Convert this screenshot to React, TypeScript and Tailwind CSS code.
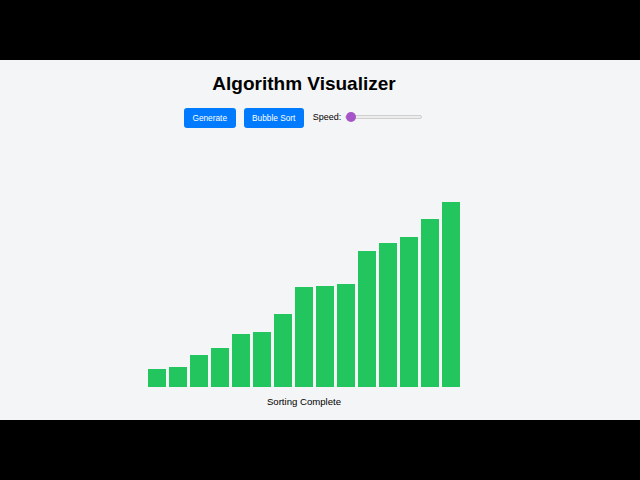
import { useState } from "react";

const heights = [18, 20, 32, 39, 53, 55, 73, 100, 101, 103, 136, 144, 150, 168, 185];

export default function App() {
  const [speed, setSpeed] = useState(0);

  return (
    <div
      className="flex h-screen w-full flex-col bg-black"
      style={{ fontFamily: '"Liberation Sans", Arial, sans-serif' }}
    >
      <div className="h-[60px] shrink-0" />
      <div className="flex h-[360px] shrink-0 flex-col items-center bg-[#f4f5f7] pr-[32px]">
        <h1 className="mt-[12px] text-[19px] font-bold leading-[24px] text-black">
          Algorithm Visualizer
        </h1>
        <div className="mt-[12px] mr-[2px] flex h-[20px] items-center">
          <button className="h-[20px] w-[52px] rounded-[3px] bg-[#007bff] text-[8.3px] text-white">
            Generate
          </button>
          <button className="ml-[8px] h-[20px] w-[60px] rounded-[3px] bg-[#007bff] text-[8.3px] text-white">
            Bubble Sort
          </button>
          <span className="ml-[9px] -mt-[3px] text-[9px] leading-[12px] text-black">Speed:</span>
          <input
            type="range"
            min={0}
            max={100}
            value={speed}
            onChange={(e) => setSpeed(Number(e.target.value))}
            className="ml-[4px] -mt-[3px] h-[10px] w-[77px] cursor-pointer appearance-none bg-transparent [&::-webkit-slider-runnable-track]:h-[4px] [&::-webkit-slider-runnable-track]:rounded-full [&::-webkit-slider-runnable-track]:border [&::-webkit-slider-runnable-track]:border-[#cfcfcf] [&::-webkit-slider-runnable-track]:bg-[#ececec] [&::-webkit-slider-thumb]:-mt-[4px] [&::-webkit-slider-thumb]:h-[10px] [&::-webkit-slider-thumb]:w-[10px] [&::-webkit-slider-thumb]:appearance-none [&::-webkit-slider-thumb]:rounded-full [&::-webkit-slider-thumb]:bg-[#a655c8]"
          />
        </div>
        <div className="flex h-[259px] items-end gap-[3px]">
          {heights.map((h, i) => (
            <div
              key={i}
              className="w-[18px] bg-[#22c55e]"
              style={{ height: `${h}px` }}
            />
          ))}
        </div>
        <p className="mt-[9px] text-[9.6px] leading-[12px] text-black">Sorting Complete</p>
      </div>
      <div className="flex-1" />
    </div>
  );
}
